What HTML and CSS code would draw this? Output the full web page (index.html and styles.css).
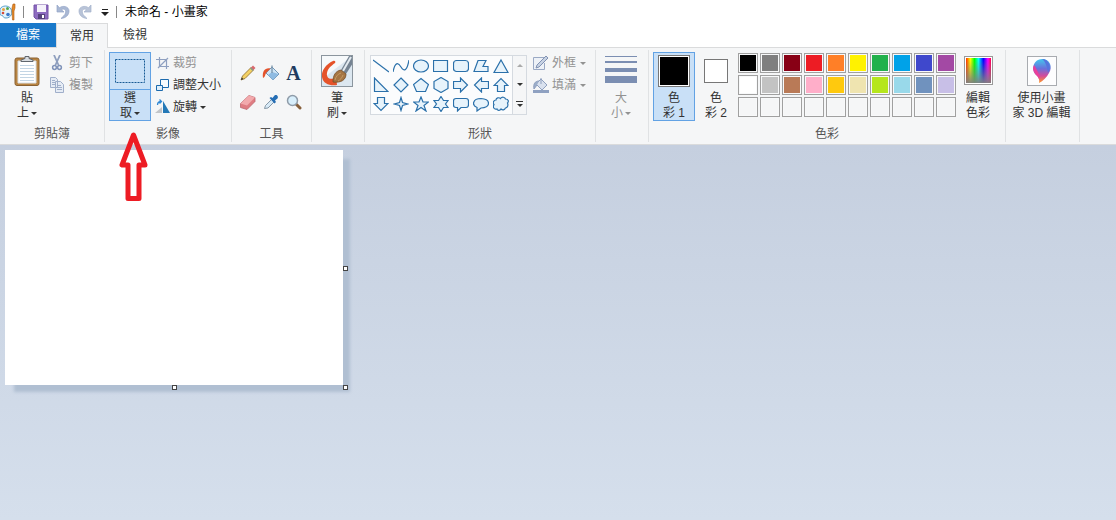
FILE: index.html
```html
<!DOCTYPE html>
<html lang="zh-Hant">
<head>
<meta charset="utf-8">
<title>未命名 - 小畫家</title>
<link rel="stylesheet" href="styles.css">
</head>
<body>
<header class="titlebar">
  <svg class="app-icon" width="16" height="20" viewBox="0 0 16 20"><path d="M0 7C2 3 9 3 11 7c2 4 0 9-5 9-2 0-3-1-3-2 0-1-3 0-3-2z" fill="#e3f3fb" stroke="#5aa2cb"/><circle cx="3.500" cy="7.500" r="1.500" fill="#e8a33c"/><circle cx="7.500" cy="6.500" r="1.500" fill="#55a84d"/><circle cx="3" cy="11" r="1.300" fill="#d54a3a"/><circle cx="8" cy="12.500" r="1.800" fill="#3a78cc"/><path d="M12 6l1-4 2 0 0 4-1 3v9h-1.500l-.500-9z" fill="#e58a27" stroke="#ad5a16" stroke-width=".6"/></svg>
  <span class="divider"></span>
  <button class="quick" aria-label="儲存"><svg width="16" height="16" viewBox="0 0 16 16"><path d="M1 1h14v14H3l-2-2z" fill="#8d6bc0" stroke="#7453a6"/><path d="M4 1h9v7H4z" fill="#f5f2fb"/><path d="M5 10h7v5H5z" fill="#55427d"/><path d="M9 11h2v3H9z" fill="#fff"/></svg></button>
  <button class="quick" aria-label="復原"><svg width="16" height="16" viewBox="0 0 16 16"><path d="M2 1v7h7L6.500 5.800C9 4 11.500 6 10.500 9 10 11 8 12.500 6 14.500c5-.5 8-3.500 8-7.500 0-4.500-6-6-9.500-3.200z" fill="#a9b8d4" stroke="#92a4c6" stroke-width=".7"/></svg></button>
  <button class="quick" aria-label="重做"><svg width="16" height="16" viewBox="0 0 16 16"><path d="M14 1v7H7l2.500-2.200C7 4 4.500 6 5.500 9 6 11 8 12.500 10 14.500 5 14 2 11 2 7c0-4.500 6-6 9.500-3.200z" fill="#b9c4d8" stroke="#a3b1cb" stroke-width=".7"/></svg></button>
  <button class="quick quick-menu" aria-label="自訂快速存取工具列"><svg width="8" height="8" viewBox="0 0 8 8"><path d="M1 0h6v1H1zM0 3h8L4 7z" fill="#222"/></svg></button>
  <span class="divider"></span>
  <h1 class="title">未命名 - 小畫家</h1>
</header>
<nav class="tabs">
  <button class="tab tab-file">檔案</button>
  <button class="tab tab-active">常用</button>
  <button class="tab tab-view">檢視</button>
</nav>
<section class="ribbon">
  <div class="group clipboard">
    <div class="tools">
      <button class="big paste">
        <svg width="26" height="32" viewBox="0 0 26 32"><rect x="1" y="3" width="24" height="27.500" rx="2" fill="#b98543" stroke="#8a6233"/><path d="M4 6h18v22H4z" fill="#fff" stroke="#d9dfe5"/><path d="M6 10.500h14M6 13.500h14M6 16.500h14M6 19.500h14M6 22.500h14M6 25.500h14" stroke="#c3d5e4"/><path d="M7 6.500V5l4-1.500V1.500h4v2l4 1.500v1.500z" fill="#d8dce0" stroke="#60666d"/></svg>
        <span>貼<br>上<i class="caret"></i></span>
      </button>
      <div class="stack">
        <button class="small" disabled><svg width="16" height="16" viewBox="0 0 16 16"><path d="M5 0l4.500 10M11 0l-4.500 10" stroke="#8f9fbe" stroke-width="1.800" fill="none"/><circle cx="5.500" cy="12.500" r="1.900" fill="none" stroke="#8194ba" stroke-width="1.500"/><circle cx="10.500" cy="12.500" r="1.900" fill="none" stroke="#8194ba" stroke-width="1.500"/></svg>剪下</button>
        <button class="small" disabled><svg width="16" height="16" viewBox="0 0 16 16"><path d="M1.500.500h5l2 2v8h-7zM6.500 4.500h5l3 3v8h-8z" fill="#e6ecf5" stroke="#a0afca"/><path d="M3 3.500h3M3 5.500h3M3 7.500h3M8 8.500h4M8 10.500h5M8 12.500h5" stroke="#a0afca"/></svg>複製</button>
      </div>
    </div>
    <h2>剪貼簿</h2>
  </div>
  <div class="group image">
    <div class="tools">
      <button class="big select">
        <svg width="32" height="26" viewBox="0 0 32 26"><rect x="1.500" y="1.500" width="29" height="23" fill="none" stroke="#175a94" stroke-dasharray="2 1"/></svg>
        <span>選<br>取<i class="caret"></i></span>
      </button>
      <div class="stack">
        <button class="small" disabled><svg width="16" height="16" viewBox="0 0 16 16"><path d="M1 4.500h10.500V14M4.500 2v9.500H14M3 13L13 3" fill="none" stroke="#8fa0c0" stroke-width="1.200"/></svg>裁剪</button>
        <button class="small"><svg width="16" height="16" viewBox="0 0 16 16"><path d="M5.500 2.500h8v8h-8z" fill="#f7fbfe" stroke="#1c6aad"/><path d="M1.500 8.500h6v5h-6z" fill="#dfeefa" stroke="#1c6aad"/></svg>調整大小</button>
        <button class="small"><svg width="16" height="16" viewBox="0 0 16 16"><path d="M7 8v6H0z" fill="#c2c5c9"/><path d="M8 2v12h7z" fill="#2479b7"/><path d="M2.500 6c0-3 2-3.500 4-3.500M4.500 0.500l2 2-2 2" fill="none" stroke="#2e86d3" stroke-width="1.300"/></svg>旋轉<i class="caret"></i></button>
      </div>
    </div>
    <h2>影像</h2>
  </div>
  <div class="group kit">
    <div class="tools">
      <div class="kit-grid">
        <button aria-label="鉛筆"><svg width="16" height="16" viewBox="0 0 16 16"><path d="M1 15l1.500-4L11 2.500l2.500 2.500-8.500 8.500z" fill="#f4d163" stroke="#8c6a27" stroke-width=".8"/><path d="M10.500 3l2.500-2.500 2.500 2.500L13 5.500z" fill="#d96a6f"/><path d="M10 3.500l1-1L13.500 5l-1 1z" fill="#7fa08d"/><path d="M1 15l.800-2.500L3.500 14z" fill="#333"/></svg></button>
        <button aria-label="以色彩填滿"><svg width="18" height="18" viewBox="0 0 18 18"><path d="M10 3l7 7-6 6-7-7z" fill="#cfe5f5" stroke="#7398b8"/><path d="M10 8l6.500 2-5.500 6-5-5z" fill="#8fbbe2"/><path d="M10 9V1.500" fill="none" stroke="#7894ab" stroke-width="1.300"/><path d="M8.500 4.500C3 3.500 0 7 1 14c2.500-1 2-4 3.500-5.500z" fill="#e4532c"/></svg></button>
        <button class="letter" aria-label="文字">A</button>
        <button aria-label="橡皮擦"><svg width="18" height="16" viewBox="0 0 18 16"><path d="M1.500 9.500l8.500-8 6 2v4l-8 8-6.500-2z" fill="#df7d83" stroke="#bd6870" stroke-width=".8"/><path d="M1.500 9.500l8.500-8 6 2-8 8z" fill="#f2aaad"/></svg></button>
        <button aria-label="色彩選擇器"><svg width="16" height="16" viewBox="0 0 16 16"><path d="M1.500 14.500l1-3L8.500 5.500l2.500 2.500-6 6z" fill="#d7eaf7" stroke="#6d8193" stroke-width=".8"/><path d="M6.500 4l1.500-1 1.500 1 2-2.500c2-1.500 4.500 1 3 3L12 6.500l1 1.500-1.500 1.500z" fill="#256eb5"/></svg></button>
        <button aria-label="放大鏡"><svg width="16" height="16" viewBox="0 0 16 16"><path d="M10.500 10.500l3.500 3.500" stroke="#87603c" stroke-width="3" stroke-linecap="round"/><circle cx="6.500" cy="6.500" r="5" fill="#d8effc" stroke="#8f9ca9" stroke-width="1.500"/></svg></button>
      </div>
    </div>
    <h2>工具</h2>
  </div>
  <div class="group brushes">
    <div class="tools">
      <button class="big">
        <svg width="32" height="32" viewBox="0 0 32 32"><rect x=".5" y=".5" width="31" height="31" fill="#dce7f0"/><path d="M1 1h30L1 24z" fill="#f6f9fb"/><path d="M12 6C5 9 0 16 1 22c1 7 8 9 15 8l-1-8c-5 4-10 1-9-4 1-5 4-7 8-10 1-1 0-3-2-2z" fill="#e5532a"/><path d="M20 15l8-14h4v7l-7 11z" fill="#758392"/><path d="M22 16l8-14" stroke="#e3eaf0" stroke-width="2"/><path d="M12 27c0-6 2-11 8-12l5 4c0 6-5 9-13 8z" fill="#a57543" stroke="#754c25" stroke-width=".8"/><path d="M14 25c1-4 3-6 6-7M17 26c2-1 4-3 5-6" stroke="#c49a63" fill="none"/><rect x=".5" y=".5" width="31" height="31" fill="none" stroke="#8b959e"/></svg>
        <span>筆<br>刷<i class="caret"></i></span>
      </button>
    </div>
  </div>
  <div class="group shapes">
    <div class="tools">
      <div class="gallery">
        <div class="shape-grid">
          <button aria-label="直線"><svg viewBox="0 0 16 16"><path d="M0 2l16 12"/></svg></button>
          <button aria-label="曲線"><svg viewBox="0 0 16 16"><path d="M0 14C2 4 5 4 8 9s6 4 8-7" fill="none"/></svg></button>
          <button aria-label="橢圓形"><svg viewBox="0 0 16 16"><ellipse cx="8" cy="8" rx="7.500" ry="6"/></svg></button>
          <button aria-label="矩形"><svg viewBox="0 0 16 16"><path d="M.500 2.500h14v11h-14z"/></svg></button>
          <button aria-label="圓角矩形"><svg viewBox="0 0 16 16"><rect x=".5" y="2.500" width="15" height="11" rx="3"/></svg></button>
          <button aria-label="多邊形"><svg viewBox="0 0 16 16"><path d="M5 2.500h8L10 8.500h5v5H1z"/></svg></button>
          <button aria-label="三角形"><svg viewBox="0 0 16 16"><path d="M8 2l7 12.500H1z"/></svg></button>
          <button aria-label="直角三角形"><svg viewBox="0 0 16 16"><path d="M1.500 1v13.500H15z"/></svg></button>
          <button aria-label="菱形"><svg viewBox="0 0 16 16"><path d="M8 1l7 7-7 7-7-7z"/></svg></button>
          <button aria-label="五邊形"><svg viewBox="0 0 16 16"><path d="M8 1.500l7.500 6-3 7h-9l-3-7z"/></svg></button>
          <button aria-label="六邊形"><svg viewBox="0 0 16 16"><path d="M8 .500l7 4v7l-7 4-7-4v-7z"/></svg></button>
          <button aria-label="向右箭號"><svg viewBox="0 0 16 16"><path d="M.500 4.500h7V1l7 7-7 7v-3.500h-7z"/></svg></button>
          <button aria-label="向左箭號"><svg viewBox="0 0 16 16"><path d="M15.500 4.500h-7V1l-7 7 7 7v-3.500h7z"/></svg></button>
          <button aria-label="向上箭號"><svg viewBox="0 0 16 16"><path d="M4.500 14.500v-6H1l7-7 7 7h-3.500v6z"/></svg></button>
          <button aria-label="向下箭號"><svg viewBox="0 0 16 16"><path d="M4.500 1.500v6H1l7 7 7-7h-3.500v-6z"/></svg></button>
          <button aria-label="四角星"><svg viewBox="0 0 16 16"><path d="M8 1.500l1.500 5 5 1.500-5 1.500-1.500 5-1.500-5-5-1.500 5-1.500z"/></svg></button>
          <button aria-label="五角星"><svg viewBox="0 0 16 16"><path d="M8 1l2 5h5.500l-4.500 3.500 2 5.500-5-3.500L3 15l2-5.500L.500 6H6z"/></svg></button>
          <button aria-label="六角星"><svg viewBox="0 0 16 16"><path d="M8 .500l2.500 4H15L12.500 8l2.500 3.500h-4.500l-2.500 4-2.500-4H1L3.500 8 1 4.500h4.500z"/></svg></button>
          <button aria-label="圓角矩形圖說文字"><svg viewBox="0 0 16 16"><path d="M3 2.500h10q2.500 0 2.500 2.500v4q0 2.500-2.500 2.500H8L4.500 15v-3.500H3Q.500 11.500.500 9V5Q.500 2.500 3 2.500z"/></svg></button>
          <button aria-label="橢圓形圖說文字"><svg viewBox="0 0 16 16"><path d="M4 15v-3.500C-1.500 9.500-.5 2.500 8 2.500c10 .5 10 9 0 9.500z"/></svg></button>
          <button aria-label="雲朵形圖說文字"><svg viewBox="0 0 16 16"><path d="M3 4c0-2 3-3 4.500-1.500C9 .500 12 1 12.500 3c3 0 3.500 2.500 2 4 1 2 0 5-2 5-1 2-3 2.500-4.500 1-1 2-4 1.500-4 0-3 1-4.500-2-3-4.500C-.500 7 .500 4 3 4z"/></svg></button>
        </div>
        <div class="gallery-scroll">
          <button class="faint" aria-label="上一列"><i class="caret up"></i></button>
          <button aria-label="下一列"><i class="caret"></i></button>
          <button class="more" aria-label="更多"><i class="caret"></i></button>
        </div>
      </div>
      <div class="stack">
        <button class="small" disabled><svg width="16" height="16" viewBox="0 0 16 16"><path d="M11 2.500H.500v12h11V8" fill="#edf1f7" stroke="#9aa9c4"/><path d="M3 13l1-3 9-9 2 2-9 9z" fill="#c7d2e3" stroke="#8192b3"/></svg>外框<i class="caret"></i></button>
        <button class="small" disabled><svg width="16" height="16" viewBox="0 0 16 16"><path d="M0 13h16v3H0z" fill="#8fa1c1"/><path d="M8 2l6 6-5 5-6-6z" fill="#d9e1ee" stroke="#8fa0be"/><path d="M6 4C2 4 0 7 1 12l3-4M8 7V1" fill="#9badc9" stroke="#8fa0be"/></svg>填滿<i class="caret"></i></button>
      </div>
    </div>
    <h2>形狀</h2>
  </div>
  <div class="group size">
    <div class="tools">
      <button class="big" disabled>
        <svg width="32" height="32" viewBox="0 0 32 32"><path d="M0 1h32v1H0zM0 6h32v2H0zM0 13h32v4H0zM0 21h32v7H0z" fill="#7b8eb2"/></svg>
        <span>大<br>小<i class="caret"></i></span>
      </button>
    </div>
  </div>
  <div class="group colors">
    <div class="tools">
      <button class="big color-one"><i class="chip"></i><span>色<br>彩 1</span></button>
      <button class="big color-two"><i class="chip"></i><span>色<br>彩 2</span></button>
      <div class="palette">
        <button class="black" aria-label="黑色"></button><button class="gray" aria-label="灰色"></button><button class="maroon" aria-label="深紅色"></button><button class="red" aria-label="紅色"></button><button class="orange" aria-label="橙色"></button><button class="yellow" aria-label="黃色"></button><button class="green" aria-label="綠色"></button><button class="sky" aria-label="青綠色"></button><button class="indigo" aria-label="靛藍色"></button><button class="purple" aria-label="紫色"></button>
        <button class="white" aria-label="白色"></button><button class="silver" aria-label="淺灰色"></button><button class="brown" aria-label="褐色"></button><button class="rose" aria-label="玫瑰色"></button><button class="gold" aria-label="金色"></button><button class="cream" aria-label="淺黃色"></button><button class="lime" aria-label="萊姆色"></button><button class="aqua" aria-label="淺青綠色"></button><button class="steel" aria-label="藍灰色"></button><button class="lavender" aria-label="淡紫色"></button>
        <button aria-label="自訂 1"></button><button aria-label="自訂 2"></button><button aria-label="自訂 3"></button><button aria-label="自訂 4"></button><button aria-label="自訂 5"></button><button aria-label="自訂 6"></button><button aria-label="自訂 7"></button><button aria-label="自訂 8"></button><button aria-label="自訂 9"></button><button aria-label="自訂 10"></button>
      </div>
      <button class="big edit-colors"><i class="spectrum"></i><span>編輯<br>色彩</span></button>
    </div>
    <h2>色彩</h2>
  </div>
  <div class="group paint3d">
    <div class="tools">
      <button class="big">
        <svg width="30" height="30" viewBox="0 0 30 30"><defs><linearGradient id="drop" x1="0" y1="0" x2="0" y2="1"><stop offset="0" stop-color="#42c7ee"/><stop offset=".4" stop-color="#6a70db"/><stop offset=".7" stop-color="#d34b9b"/><stop offset="1" stop-color="#ff9c24"/></linearGradient></defs><rect x=".5" y=".5" width="29" height="29" fill="#fdfdfe" stroke="#a8abb0"/><path d="M12 27c1-4-1-6-4-9C4 12 7 3 15 3c8 0 11 8 7 14-2 4-6 8-10 10z" fill="url(#drop)"/><path d="M7 9c2 2 4 8 6 11l-1 3c0-3-6-5-6-11z" fill="#e83f9b"/><path d="M15 3c7 0 10 8 6 14-1-6-2-11-6-14z" fill="#5674de"/></svg>
        <span>使用小畫<br>家 3D 編輯</span>
      </button>
    </div>
  </div>
</section>
<main class="workspace">
  <div class="sheet">
    <i class="grip grip-right"></i><i class="grip grip-bottom"></i><i class="grip grip-corner"></i>
  </div>
</main>
<svg class="pointer" width="30" height="72" viewBox="0 0 30 72"><path d="M14.500 5L3 35h6v33.500h11V35h6z" fill="none" stroke="#ed1c24" stroke-width="5" stroke-linejoin="round"/></svg>
</body>
</html>
```
FILE: styles.css
```css
* { box-sizing: border-box; }
body {
  margin: 0;
  min-height: 100vh;
  display: flex;
  flex-direction: column;
  position: relative;
  background: #fff;
  color: #333;
  font: 12px/15px "Liberation Sans", "Noto Sans CJK TC", sans-serif;
}
button {
  margin: 0;
  padding: 0;
  border: 0;
  background: none;
  color: inherit;
  font: inherit;
}
button:disabled { color: #929292; }
svg { display: block; flex: none; }
h1, h2 { margin: 0; font-size: 12px; font-weight: 400; }

.titlebar { display: flex; align-items: center; height: 23px; }
.divider { width: 1px; height: 12px; background: #888; margin: 0 9px 0 7px; }
.quick { width: 22px; }
.quick-menu { display: flex; justify-content: center; width: 12px; padding-top: 3px; }
.quick-menu + .divider { margin: 0 8px 0 5px; }
.title { padding-top: 2px; color: #000; }

.tabs { display: flex; height: 25px; border-bottom: 1px solid #dadbdc; }
.tab { width: 52px; color: #333; }
.tab-file { width: 56px; background: #1979ca; color: #fff; }
.tab-view { width: 54px; }
.tab-active {
  height: 25px;
  border: 1px solid #dadbdc;
  border-bottom: 0;
  background: #f5f6f7;
}

.ribbon {
  display: flex;
  height: 97px;
  background: #f5f6f7;
  border-bottom: 1px solid #dadbdc;
}
.group {
  display: flex;
  flex-direction: column;
  justify-content: space-between;
  margin: 2px 0;
  padding: 2px 4px 0;
  border-right: 1px solid #e0e2e4;
}
.group h2 { text-align: center; color: #555; }
.tools { display: flex; align-items: flex-start; }
.big {
  display: flex;
  flex-direction: column;
  align-items: center;
  justify-content: space-between;
  width: 42px;
  height: 69px;
  padding-top: 3px;
}
.stack { display: flex; flex-direction: column; }
.small { display: flex; align-items: center; gap: 2px; height: 22px; white-space: nowrap; }
.caret {
  display: inline-block;
  margin-left: 2px;
  border: 3px solid transparent;
  border-top-color: currentColor;
  border-bottom: 0;
  vertical-align: middle;
}
.small .caret { margin-left: 1px; }
.up { transform: rotate(180deg); }
.clipboard { width: 105px; }
.clipboard .big { margin: 0 1px 0 2px; }
.clipboard .small { gap: 4px; }
.image { width: 127px; }
.select {
  padding-top: 6px;
  box-shadow: inset 0 0 0 1px #62a2e4;
  background: linear-gradient(#62a2e4, #62a2e4) 0 37px / 100% 1px no-repeat #c9e0f7;
}
.image .stack { padding-left: 4px; }

.kit { width: 80px; }
.kit-grid { display: grid; grid-template-columns: repeat(3, 23px); grid-auto-rows: 29px; padding-top: 6px; }
.kit-grid button { display: grid; place-items: center; }
.kit-grid .letter { font: bold 20px/20px "Liberation Serif", serif; color: #213b60; }
.brushes { width: 53px; }

.shapes { width: 231px; }
.gallery { display: flex; width: 157px; height: 60px; margin: 3px 2px 0 1px; border: 1px solid #d5dae0; background: #fbfcfd; }
.shape-grid { flex: 1; display: grid; grid-template-columns: repeat(7, 20px); grid-auto-rows: 19px; }
.shape-grid button { display: grid; place-items: center; }
.shape-grid svg { width: 16px; height: 16px; fill: #e7f3fb; stroke: #2a70aa; stroke-width: 1.2; }
.gallery-scroll { display: flex; flex-direction: column; width: 14px; border-left: 1px solid #d5dae0; background: #f5f6f7; }
.gallery-scroll button { flex: 1; display: grid; place-content: center; justify-items: center; }
.gallery-scroll .caret { margin: 0; }
.faint { color: #aaa; }
.more::before { content: ""; width: 7px; height: 1px; margin-bottom: 2px; background: #333; }
.shapes .stack { padding-left: 4px; }
.shapes .small { gap: 3px; }
.size { width: 53px; }

.colors { width: 357px; }
.chip { display: block; border: 1px solid #777; background: #fff; }
.color-one { box-shadow: inset 0 0 0 1px #62a2e4; background: #c9e0f7; }
.color-one .chip { width: 32px; height: 32px; background: #000; box-shadow: inset 0 0 0 1px #fff; }
.color-two { padding-top: 7px; }
.color-two .chip { width: 24px; height: 24px; margin-bottom: auto; }
.palette { display: grid; grid-template-columns: repeat(10, 20px); grid-auto-rows: 20px; gap: 2px; padding: 1px 1px 0; }
.palette button { padding: 1px; border: 1px solid #a0a0a0; background-clip: content-box; box-shadow: inset 0 0 0 1px #f8f9fa; }
.black { background-color: #000; }
.gray { background-color: #7f7f7f; }
.maroon { background-color: #880015; }
.red { background-color: #ed1c24; }
.orange { background-color: #ff7f27; }
.yellow { background-color: #fff200; }
.green { background-color: #22b14c; }
.sky { background-color: #00a2e8; }
.indigo { background-color: #3f48cc; }
.purple { background-color: #a349a4; }
.white { background-color: #fff; }
.silver { background-color: #c3c3c3; }
.brown { background-color: #b97a57; }
.rose { background-color: #ffaec9; }
.gold { background-color: #ffc90e; }
.cream { background-color: #efe4b0; }
.lime { background-color: #b5e61d; }
.aqua { background-color: #99d9ea; }
.steel { background-color: #7092be; }
.lavender { background-color: #c8bfe7; }
.edit-colors { padding-top: 4px; }
.spectrum {
  width: 29px;
  height: 29px;
  border: 1px solid #999;
  box-shadow: inset 0 0 0 1px #fff;
  background: linear-gradient(transparent 10%, #808080), linear-gradient(90deg, red, #ff0 20%, #0f0 35%, #0ff 50%, #00f 68%, #f0f 85%, red);
}
.paint3d { width: 74px; }
.paint3d .big { width: 63px; padding-top: 4px; white-space: nowrap; }

.workspace { flex: 1; padding: 5px; background: linear-gradient(#c5cfdf, #d5dfec); }
.sheet { position: relative; width: 338px; height: 235px; background: #fff; box-shadow: 8px 8px 3px -1px #b0bfd2; }
.grip { position: absolute; width: 5px; height: 5px; border: 1px solid #444; background: #fff; }
.grip-right { left: 100%; top: calc(50% - 2px); }
.grip-bottom { left: calc(50% - 2px); top: 100%; }
.grip-corner { left: 100%; top: 100%; }
.pointer { position: absolute; left: 119px; top: 130px; }
```
